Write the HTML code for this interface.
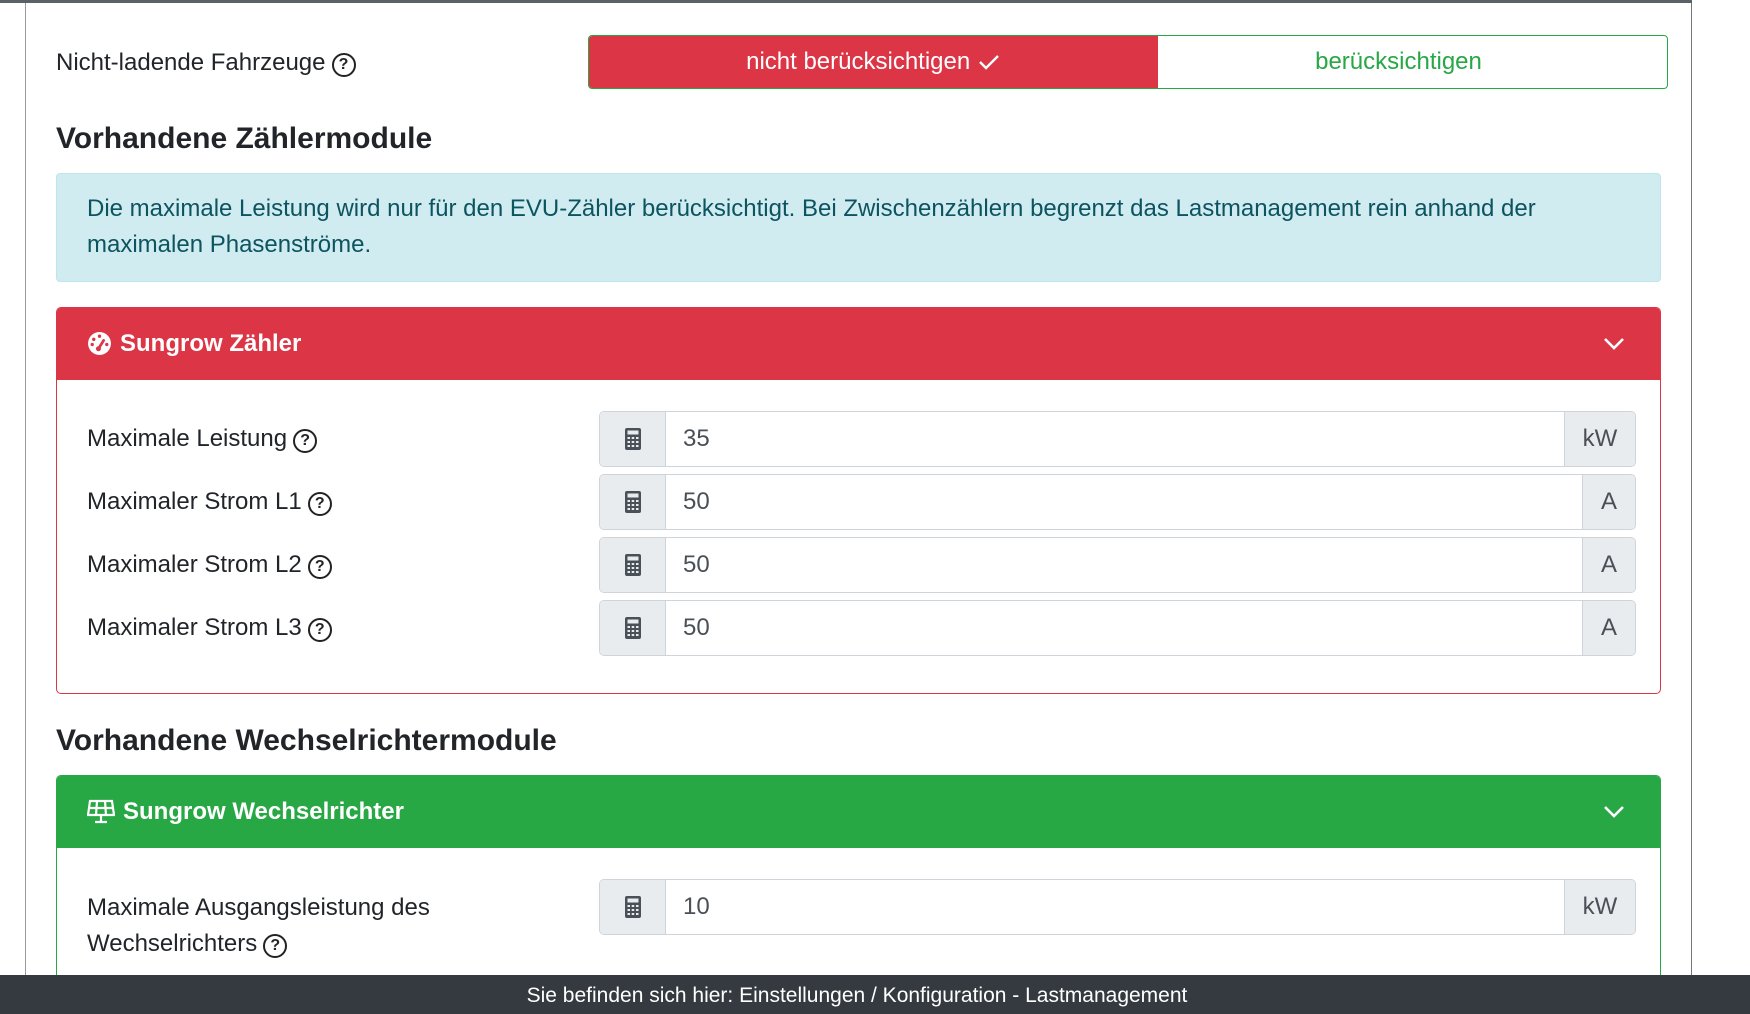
<!DOCTYPE html>
<html><head><meta charset="utf-8"><style>
*{box-sizing:border-box;margin:0;padding:0}
html,body{width:1750px;height:1014px;overflow:hidden}
body{background:#fff;font-family:"Liberation Sans",sans-serif;color:#212529;position:relative}
.abs{position:absolute}
.topline{left:0;top:0;width:1692px;height:3px;background:#5a6168}
.cont{left:25px;top:0;width:1667px;height:1014px;border-left:1px solid #9a9a9a;border-right:1px solid #777}
.lbl{font-size:24px;white-space:nowrap}
.q{display:inline-block;width:24px;height:24px;border:2px solid #222;border-radius:50%;font-size:16px;font-weight:bold;text-align:center;line-height:20px;vertical-align:1px;margin-left:6px}
.btns{left:588px;top:35px;width:1080px;height:54px;border:1px solid #28a745;border-radius:4px;overflow:hidden;display:flex;font-size:24px}
.btns div{display:flex;align-items:center;justify-content:center}
h2{position:absolute;font-size:30px;font-weight:bold;color:#212529}
.alert{left:56px;top:173px;width:1605px;height:109px;background:#d1ecf1;border:1px solid #bee5eb;border-radius:4px;color:#0c5460;font-size:24px;line-height:36px;padding:17px 90px 0 30px}
.card{left:56px;width:1605px;border-radius:5px;overflow:hidden}
.ch{height:73px;color:#fff;font-size:24px;font-weight:bold;display:flex;align-items:center;padding-left:31px}
.ch svg{margin-right:8px}
.chev{position:absolute;right:27px}
.ig{position:absolute;left:599px;height:56px;border:1px solid #ced4da;border-radius:5px;display:flex;overflow:hidden;font-size:24px}
.ig .ic{width:66px;background:#e9ecef;border-right:1px solid #ced4da;display:flex;align-items:center;justify-content:center}
.ig .v{flex:1;display:flex;align-items:center;padding-left:17px;color:#495057}
.ig .u{background:#e9ecef;border-left:1px solid #ced4da;display:flex;align-items:center;justify-content:center;color:#495057}
.footer{left:0;top:975px;width:1750px;height:39px;background:#343a40;color:#fff;font-size:21px;text-align:center;line-height:41px;padding-right:36px}
</style></head><body>
<div class="abs cont"></div>
<div class="abs topline"></div>
<div class="abs lbl" style="left:56px;top:49px">Nicht-ladende Fahrzeuge<span class="q">?</span></div>
<div class="abs btns"><div style="width:569px;background:#dc3545;color:#fff">nicht berücksichtigen&nbsp;<svg width="24" height="18" viewBox="0 0 22 18"><path d="M2 9l6 6L20 3" fill="none" stroke="#fff" stroke-width="2.4"/></svg></div><div style="flex:1;color:#28a745;padding-right:28px">berücksichtigen</div></div>
<h2 style="left:56px;top:122px">Vorhandene Zählermodule</h2>
<div class="abs alert">Die maximale Leistung wird nur für den EVU-Zähler berücksichtigt. Bei Zwischenzählern begrenzt das Lastmanagement rein anhand der maximalen Phasenströme.</div>

<div class="abs card" style="top:307px;height:387px;border:1px solid #dc3545">
<div class="ch" style="background:#dc3545;margin:-1px -1px 0"><svg width="25" height="25" viewBox="0 0 24 24"><circle cx="12" cy="12" r="11" fill="#fff"/><circle cx="12" cy="5" r="1.6" fill="#dc3545"/><circle cx="6.5" cy="8" r="1.6" fill="#dc3545"/><circle cx="5" cy="13" r="1.6" fill="#dc3545"/><circle cx="19" cy="13" r="1.6" fill="#dc3545"/><path d="M11 17l5-8" stroke="#dc3545" stroke-width="2.6" stroke-linecap="round"/><circle cx="11" cy="17" r="2.4" fill="#dc3545"/></svg>Sungrow Zähler<svg class="chev" width="22" height="14" viewBox="0 0 22 14"><path d="M2 2l9 9 9-9" fill="none" stroke="#fff" stroke-width="2.6"/></svg></div>
</div>
<div class="abs lbl" style="left:87px;top:425px">Maximale Leistung<span class="q">?</span></div>
<div class="abs lbl" style="left:87px;top:488px">Maximaler Strom L1<span class="q">?</span></div>
<div class="abs lbl" style="left:87px;top:551px">Maximaler Strom L2<span class="q">?</span></div>
<div class="abs lbl" style="left:87px;top:614px">Maximaler Strom L3<span class="q">?</span></div>

<div class="ig" style="top:411px;width:1037px"><div class="ic"><svg width="16" height="22" viewBox="0 0 16 22"><rect x="0" y="0" width="16" height="22" rx="2" fill="#495057"/><rect x="2.5" y="2.5" width="11" height="4" fill="#e9ecef"/><g fill="#e9ecef"><rect x="2.5" y="9" width="2.5" height="2"/><rect x="6.7" y="9" width="2.5" height="2"/><rect x="11" y="9" width="2.5" height="2"/><rect x="2.5" y="13" width="2.5" height="2"/><rect x="6.7" y="13" width="2.5" height="2"/><rect x="11" y="13" width="2.5" height="2"/><rect x="2.5" y="17" width="2.5" height="2"/><rect x="6.7" y="17" width="2.5" height="2"/><rect x="11" y="17" width="2.5" height="2"/></g></svg></div><div class="v">35</div><div class="u" style="width:71px">kW</div></div>
<div class="ig" style="top:474px;width:1037px"><div class="ic"><svg width="16" height="22" viewBox="0 0 16 22"><rect width="16" height="22" rx="2" fill="#495057"/><rect x="2.5" y="2.5" width="11" height="4" fill="#e9ecef"/><g fill="#e9ecef"><rect x="2.5" y="9" width="2.5" height="2"/><rect x="6.7" y="9" width="2.5" height="2"/><rect x="11" y="9" width="2.5" height="2"/><rect x="2.5" y="13" width="2.5" height="2"/><rect x="6.7" y="13" width="2.5" height="2"/><rect x="11" y="13" width="2.5" height="2"/><rect x="2.5" y="17" width="2.5" height="2"/><rect x="6.7" y="17" width="2.5" height="2"/><rect x="11" y="17" width="2.5" height="2"/></g></svg></div><div class="v">50</div><div class="u" style="width:53px">A</div></div>
<div class="ig" style="top:537px;width:1037px"><div class="ic"><svg width="16" height="22" viewBox="0 0 16 22"><rect width="16" height="22" rx="2" fill="#495057"/><rect x="2.5" y="2.5" width="11" height="4" fill="#e9ecef"/><g fill="#e9ecef"><rect x="2.5" y="9" width="2.5" height="2"/><rect x="6.7" y="9" width="2.5" height="2"/><rect x="11" y="9" width="2.5" height="2"/><rect x="2.5" y="13" width="2.5" height="2"/><rect x="6.7" y="13" width="2.5" height="2"/><rect x="11" y="13" width="2.5" height="2"/><rect x="2.5" y="17" width="2.5" height="2"/><rect x="6.7" y="17" width="2.5" height="2"/><rect x="11" y="17" width="2.5" height="2"/></g></svg></div><div class="v">50</div><div class="u" style="width:53px">A</div></div>
<div class="ig" style="top:600px;width:1037px"><div class="ic"><svg width="16" height="22" viewBox="0 0 16 22"><rect width="16" height="22" rx="2" fill="#495057"/><rect x="2.5" y="2.5" width="11" height="4" fill="#e9ecef"/><g fill="#e9ecef"><rect x="2.5" y="9" width="2.5" height="2"/><rect x="6.7" y="9" width="2.5" height="2"/><rect x="11" y="9" width="2.5" height="2"/><rect x="2.5" y="13" width="2.5" height="2"/><rect x="6.7" y="13" width="2.5" height="2"/><rect x="11" y="13" width="2.5" height="2"/><rect x="2.5" y="17" width="2.5" height="2"/><rect x="6.7" y="17" width="2.5" height="2"/><rect x="11" y="17" width="2.5" height="2"/></g></svg></div><div class="v">50</div><div class="u" style="width:53px">A</div></div>

<h2 style="left:56px;top:724px">Vorhandene Wechselrichtermodule</h2>
<div class="abs card" style="top:775px;height:220px;border:1px solid #28a745">
<div class="ch" style="background:#28a745;margin:-1px -1px 0"><svg width="28" height="26" viewBox="0 0 28 26"><g fill="none" stroke="#fff" stroke-width="2.2"><path d="M3 2h22l2 14H1z"/><path d="M2 9h24M10 2l-1 14M18 2l1 14M14 16v6M8 23h12"/></g></svg>Sungrow Wechselrichter<svg class="chev" width="22" height="14" viewBox="0 0 22 14"><path d="M2 2l9 9 9-9" fill="none" stroke="#fff" stroke-width="2.6"/></svg></div>
</div>
<div class="abs lbl" style="left:87px;top:890px;line-height:36px">Maximale Ausgangsleistung des<br>Wechselrichters<span class="q">?</span></div>
<div class="ig" style="top:879px;width:1037px"><div class="ic"><svg width="16" height="22" viewBox="0 0 16 22"><rect width="16" height="22" rx="2" fill="#495057"/><rect x="2.5" y="2.5" width="11" height="4" fill="#e9ecef"/><g fill="#e9ecef"><rect x="2.5" y="9" width="2.5" height="2"/><rect x="6.7" y="9" width="2.5" height="2"/><rect x="11" y="9" width="2.5" height="2"/><rect x="2.5" y="13" width="2.5" height="2"/><rect x="6.7" y="13" width="2.5" height="2"/><rect x="11" y="13" width="2.5" height="2"/><rect x="2.5" y="17" width="2.5" height="2"/><rect x="6.7" y="17" width="2.5" height="2"/><rect x="11" y="17" width="2.5" height="2"/></g></svg></div><div class="v">10</div><div class="u" style="width:71px">kW</div></div>

<div class="abs footer">Sie befinden sich hier: Einstellungen / Konfiguration - Lastmanagement</div>
</body></html>
